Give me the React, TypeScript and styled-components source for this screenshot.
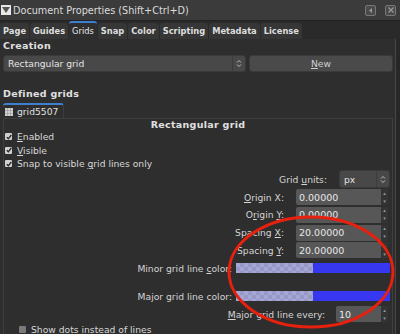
import React, { FC } from 'react';
import styled, { createGlobalStyle } from 'styled-components';

const Global = createGlobalStyle`
    html, body {
        margin: 0;
        padding: 0;
        background: #2e2e2e;
    }
    body {
        font-family: 'DejaVu Sans', sans-serif;
        font-size: 9.2px;
        color: #d8d8d8;
    }
    u {
        text-decoration-thickness: 1px;
        text-underline-offset: 1px;
    }
`;

const Window = styled.div`
    position: relative;
    width: 400px;
    height: 334px;
    overflow: hidden;
    background: #2e2e2e;
    display: flex;
    flex-direction: column;
`;

const TitleBar = styled.div`
    height: 20px;
    flex: none;
    display: flex;
    align-items: center;
    gap: 2px;
    padding: 0 4px 0 1px;
    background: #3b3b3b;
    border-bottom: 1px solid #222;
    font-size: 9.7px;
    color: #dcdcdc;
`;

const Title = styled.span`
    flex: 1;
`;

const WinButton = styled.div`
    width: 9px;
    height: 9px;
    border: 1px solid #777;
    border-radius: 2px;
    background: #4a4a4a;
    display: flex;
    align-items: center;
    justify-content: center;
    margin-left: 7px;
`;

const Tabs = styled.div`
    display: flex;
    align-items: flex-end;
    height: 18px;
    flex: none;
    background: #2a2a2a;
`;

const Tab = styled.div<{ $active?: boolean }>`
    height: 16px;
    padding: 0 3px;
    display: flex;
    align-items: center;
    font-size: 8.3px;
    font-weight: ${p => (p.$active ? 'normal' : 'bold')};
    color: ${p => (p.$active ? '#e8e8e8' : '#dedede')};
    background: ${p => (p.$active ? '#2e2e2e' : '#363636')};
    border-top: ${p => (p.$active ? '2px solid #3f7fd0' : '1px solid #2a2a2a')};
    border-radius: 3px 3px 0 0;
    margin-right: 1px;
`;

const Main = styled.div`
    flex: 1;
    display: flex;
`;

const Body = styled.div`
    flex: 1;
    display: flex;
    flex-direction: column;
    padding: 0 2px 0 3px;
`;

const Edge = styled.div`
    width: 4px;
    flex: none;
    background: #272727;
    border-left: 1px solid #474747;
`;

const Heading = styled.div`
    font-weight: bold;
    font-size: 9.5px;
    color: #e0e0e0;
    letter-spacing: 0.3px;
    height: 12px;
    display: flex;
    align-items: center;
`;

const CreateRow = styled.div`
    display: flex;
    gap: 3px;
    height: 17px;
    margin-top: 4px;
`;

const Combo = styled.div<{ $w?: number }>`
    width: ${p => (p.$w ? `${p.$w}px` : 'auto')};
    height: ${p => (p.$w ? '16px' : 'auto')};
    flex: ${p => (p.$w ? 'none' : '0 0 237px')};
    display: flex;
    align-items: center;
    background: #484848;
    border: 1px solid #3a3a3a;
    border-radius: 3px;
    padding-left: 4px;
    color: #e4e4e4;
`;

const ComboText = styled.span`
    flex: 1;
`;

const ComboArrows = styled.div`
    width: 12px;
    height: 100%;
    border-left: 1px solid #3c3c3c;
    display: flex;
    align-items: center;
    justify-content: center;
`;

const Button = styled.div`
    flex: 1;
    display: flex;
    align-items: center;
    justify-content: center;
    background: #4a4a4a;
    border: 1px solid #3a3a3a;
    border-radius: 3px;
    color: #cfcfcf;
`;

const GridTabs = styled.div`
    display: flex;
    margin-top: 4px;
`;

const GridTab = styled.div`
    height: 13px;
    display: flex;
    align-items: center;
    gap: 4px;
    padding: 0 5px 0 2px;
    border-top: 2px solid #3f7fd0;
    border-right: 1px solid #3c3c3c;
    border-radius: 3px 3px 0 0;
    color: #e0e0e0;
`;

const Frame = styled.div`
    flex: 1;
    border: 1px solid #3e3e3e;
    border-bottom: none;
    display: flex;
    flex-direction: column;
`;

const FrameTitle = styled.div`
    text-align: center;
    font-weight: bold;
    font-size: 9.5px;
    letter-spacing: 0.3px;
    color: #e0e0e0;
    height: 11px;
    line-height: 11px;
`;

const Check = styled.div<{ $indent?: number }>`
    display: flex;
    align-items: center;
    gap: 5px;
    height: 13.5px;
    padding-left: ${p => p.$indent ?? 1}px;
`;

const Box = styled.div<{ $on?: boolean }>`
    width: 7px;
    height: 7px;
    background: ${p => (p.$on ? '#d0d0d0' : '#7a7a7a')};
    border-radius: 1px;
    display: flex;
    align-items: center;
    justify-content: center;
`;

const Row = styled.div<{ $h?: number; $gap?: number }>`
    display: flex;
    justify-content: flex-end;
    align-items: center;
    gap: ${p => p.$gap ?? 12}px;
    height: ${p => p.$h ?? 17.75}px;
    padding-right: 2px;
`;

const Label = styled.span`
    color: #d4d4d4;
`;

const Spin = styled.div<{ $w: number }>`
    display: flex;
    width: ${p => p.$w}px;
    height: 16px;
    margin-right: 2px;
`;

const SpinField = styled.div`
    flex: 1;
    background: #575757;
    border-radius: 2px 0 0 2px;
    display: flex;
    align-items: center;
    padding-left: 3px;
    color: #e8e8e8;
    font-size: 9.5px;
`;

const SpinArrows = styled.div`
    width: 7px;
    background: #343434;
    display: flex;
    flex-direction: column;
    justify-content: space-around;
    align-items: center;
    font-size: 5px;
    color: #999;
    line-height: 1;
`;

const ColorBar = styled.div`
    width: 154px;
    height: 10px;
    display: flex;
`;

const Checker = styled.div`
    flex: 0 0 77px;
    background-color: #a6a6d4;
    background-image:
        linear-gradient(45deg, #9898c8 25%, transparent 25%, transparent 75%, #9898c8 75%),
        linear-gradient(45deg, #9898c8 25%, transparent 25%, transparent 75%, #9898c8 75%);
    background-size: 8px 8px;
    background-position: 0 0, 4px 4px;
`;

const Solid = styled.div`
    flex: 1;
    background: #3737f0;
`;

const Spacer = styled.div<{ $h: number }>`
    height: ${p => p.$h}px;
    flex: none;
`;

const Annotation = styled.svg`
    position: absolute;
    left: 0;
    top: 0;
    pointer-events: none;
`;

const Tick = () => (
    <svg width="6" height="6" viewBox="0 0 6 6">
        <path d="M0.8 3.2 L2.4 4.8 L5.3 1" stroke="#2a2a2a" strokeWidth="1.4" fill="none" />
    </svg>
);

const UpDown = () => (
    <svg width="6" height="9" viewBox="0 0 6 9">
        <path d="M1 3.5 L3 1.5 L5 3.5 M1 5.5 L3 7.5 L5 5.5" stroke="#bbb" strokeWidth="1" fill="none" />
    </svg>
);

const SpinBox: FC<{ value: string; w: number }> = ({ value, w }) => (
    <Spin $w={w}>
        <SpinField>{value}</SpinField>
        <SpinArrows>
            <span>▴</span>
            <span>▾</span>
        </SpinArrows>
    </Spin>
);

const Swatch = () => (
    <ColorBar>
        <Checker />
        <Solid />
    </ColorBar>
);

const tabs = ['Page', 'Guides', 'Grids', 'Snap', 'Color', 'Scripting', 'Metadata', 'License'];

const App: FC = () => (
    <Window>
        <Global />
        <TitleBar>
            <svg width="10" height="12" viewBox="0 0 10 12">
                <rect x="0" y="1" width="10" height="10" fill="#e8e8e8" />
                <path d="M1 3 L5 9 L9 3 Z" fill="#555" />
            </svg>
            <Title>Document Properties (Shift+Ctrl+D)</Title>
            <WinButton>
                <svg width="5" height="5" viewBox="0 0 5 5">
                    <path d="M4 0 L1 2.5 L4 5 Z" fill="#999" />
                </svg>
            </WinButton>
            <WinButton>
                <svg width="6" height="6" viewBox="0 0 6 6">
                    <path d="M0.5 0.5 L5.5 5.5 M5.5 0.5 L0.5 5.5" stroke="#999" strokeWidth="1.2" />
                </svg>
            </WinButton>
        </TitleBar>
        <Tabs>
            {tabs.map(t => (
                <Tab key={t} $active={t === 'Grids'}>{t}</Tab>
            ))}
        </Tabs>
        <Main>
            <Body>
                <Heading>Creation</Heading>
                <CreateRow>
                    <Combo>
                        <ComboText>Rectangular grid</ComboText>
                        <ComboArrows><UpDown /></ComboArrows>
                    </Combo>
                    <Button><span><u>N</u>ew</span></Button>
                </CreateRow>
                <Spacer $h={15} />
                <Heading>Defined grids</Heading>
                <GridTabs>
                    <GridTab>
                        <svg width="8" height="8" viewBox="0 0 8 8">
                            <rect x="0" y="0" width="8" height="8" fill="#cfcfcf" />
                            <path d="M2.5 0 V8 M5.5 0 V8 M0 2.5 H8 M0 5.5 H8" stroke="#999" strokeWidth="0.6" />
                        </svg>
                        grid5507
                    </GridTab>
                </GridTabs>
                <Frame>
                    <FrameTitle>Rectangular grid</FrameTitle>
                    <Check><Box $on><Tick /></Box><span><u>E</u>nabled</span></Check>
                    <Check><Box $on><Tick /></Box><span><u>V</u>isible</span></Check>
                    <Check><Box $on><Tick /></Box><span>Snap to visible <u>g</u>rid lines only</span></Check>
                    <Row>
                        <Label>Grid <u>u</u>nits:</Label>
                        <Combo $w={45}>
                            <ComboText>px</ComboText>
                            <ComboArrows><UpDown /></ComboArrows>
                        </Combo>
                    </Row>
                    <Row>
                        <Label><u>O</u>rigin X:</Label>
                        <SpinBox value="0.00000" w={92} />
                    </Row>
                    <Row>
                        <Label>O<u>r</u>igin <u>Y</u>:</Label>
                        <SpinBox value="0.00000" w={92} />
                    </Row>
                    <Row>
                        <Label>Spacing <u>X</u>:</Label>
                        <SpinBox value="20.00000" w={92} />
                    </Row>
                    <Row>
                        <Label>Spacing <u>Y</u>:</Label>
                        <SpinBox value="20.00000" w={92} />
                    </Row>
                    <Row $h={18} $gap={4}>
                        <Label>Minor grid line <u>c</u>olor:</Label>
                        <Swatch />
                    </Row>
                    <Spacer $h={10} />
                    <Row $h={18} $gap={4}>
                        <Label>Ma<u>j</u>or grid line color:</Label>
                        <Swatch />
                    </Row>
                    <Row $gap={11}>
                        <Label><u>M</u>ajor grid line every:</Label>
                        <SpinBox value="10" w={52} />
                    </Row>
                    <Check $indent={15}><Box /><span><u>S</u>how dots instead of lines</span></Check>
                </Frame>
            </Body>
            <Edge />
        </Main>
        <Annotation width="400" height="334">
            <ellipse cx="311" cy="272" rx="82" ry="55" fill="none" stroke="#e8200e" strokeWidth="3" />
        </Annotation>
    </Window>
);

export default App;
